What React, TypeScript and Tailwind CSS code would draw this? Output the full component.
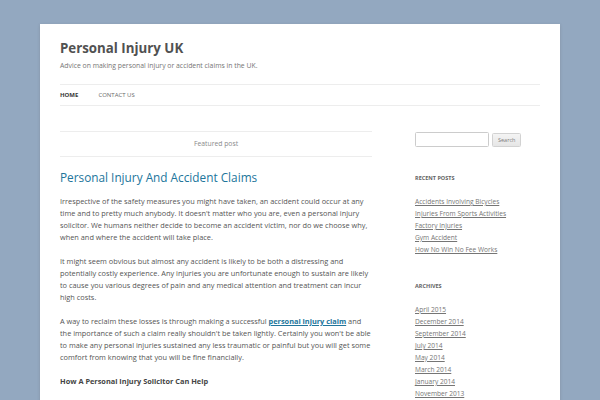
const recentPosts = [
  'Accidents Involving Bicycles',
  'Injuries From Sports Activities',
  'Factory Injuries',
  'Gym Accident',
  'How No Win No Fee Works',
];

const archives = [
  'April 2015',
  'December 2014',
  'September 2014',
  'July 2014',
  'May 2014',
  'March 2014',
  'January 2014',
  'November 2013',
  'October 2013',
];

const font = { fontFamily: '"Open Sans", "Liberation Sans", sans-serif' };

export default function App() {
  return (
    <div
      className="h-[400px] overflow-hidden bg-[#93a8c0] pt-[24px]"
      style={font}
    >
      <div className="mx-[40px] h-[420px] bg-white px-[20px] shadow-[0_1px_3px_rgba(100,100,100,0.3)]">
        <header className="pt-[12px]">
          <h1 className="text-[13.3px] font-bold leading-[24px] text-[#515151]">
            Personal Injury UK
          </h1>
          <p className="text-[6.85px] leading-[12px] text-[#757575]">
            Advice on making personal injury or accident claims in the UK.
          </p>
          <nav className="mt-[12px] border-y border-[#ededed]">
            <ul className="flex text-[6px] uppercase leading-[20px]">
              <li className="mr-[20px] font-bold text-[#373737]">Home</li>
              <li className="text-[#6a6a6a]">Contact Us</li>
            </ul>
          </nav>
        </header>

        <div className="mt-[24px] flex">
          <main className="w-[312px]">
            <div className="mt-[1px] border-y border-[#ededed] py-[6px] text-center text-[6.8px] leading-[12px] text-[#8a8a8a]">
              Featured post
            </div>
            <h2 className="mt-[13px] text-[11.8px] leading-[14px] text-[#21759b]">
              Personal Injury And Accident Claims
            </h2>
            <div className="mt-[11px] text-[7.36px] leading-[12px] text-[#555]">
              <p className="mb-[12px]">
                Irrespective of the safety measures you might have taken, an
                accident could occur at any time and to pretty much anybody. It
                doesn't matter who you are, even a personal injury solicitor. We
                humans neither decide to become an accident victim, nor do we
                choose why, when and where the accident will take place.
              </p>
              <p className="mb-[12px]">
                It might seem obvious but almost any accident is likely to be
                both a distressing and potentially costly experience. Any
                injuries you are unfortunate enough to sustain are likely to
                cause you various degrees of pain and any medical attention and
                treatment can incur high costs.
              </p>
              <p className="mb-[12px]">
                A way to reclaim these losses is through making a successful{' '}
                <a className="font-bold text-[#21759b] underline">
                  personal injury claim
                </a>{' '}
                and the importance of such a claim really shouldn't be taken
                lightly. Certainly you won't be able to make any personal
                injuries sustained any less traumatic or painful but you will
                get some comfort from knowing that you will be fine financially.
              </p>
              <p className="font-bold text-[#444]">
                How A Personal Injury Solicitor Can Help
              </p>
            </div>
          </main>

          <aside className="ml-auto w-[125px]">
            <div className="mb-[25px] flex items-center gap-[3px] pt-[2px]">
              <div className="h-[15px] w-[74px] rounded-[1.5px] border border-[#ccc] bg-white" />
              <button className="h-[14px] rounded-[1.5px] border border-[#d2d2d2] bg-gradient-to-b from-[#f4f4f4] to-[#e6e6e6] px-[5px] text-[5.5px] leading-[12px] text-[#7c7c7c]">
                Search
              </button>
            </div>

            <h3 className="mb-[12px] text-[5.5px] font-bold uppercase leading-[12px] text-[#636363]">
              Recent Posts
            </h3>
            <ul className="mb-[24px] text-[6.6px] leading-[12px] text-[#757575]">
              {recentPosts.map((p) => (
                <li key={p}>
                  <a className="underline">{p}</a>
                </li>
              ))}
            </ul>

            <h3 className="mb-[12px] text-[5.5px] font-bold uppercase leading-[12px] text-[#636363]">
              Archives
            </h3>
            <ul className="text-[6.6px] leading-[12px] text-[#757575]">
              {archives.map((a) => (
                <li key={a}>
                  <a className="underline">{a}</a>
                </li>
              ))}
            </ul>
          </aside>
        </div>
      </div>
    </div>
  );
}
